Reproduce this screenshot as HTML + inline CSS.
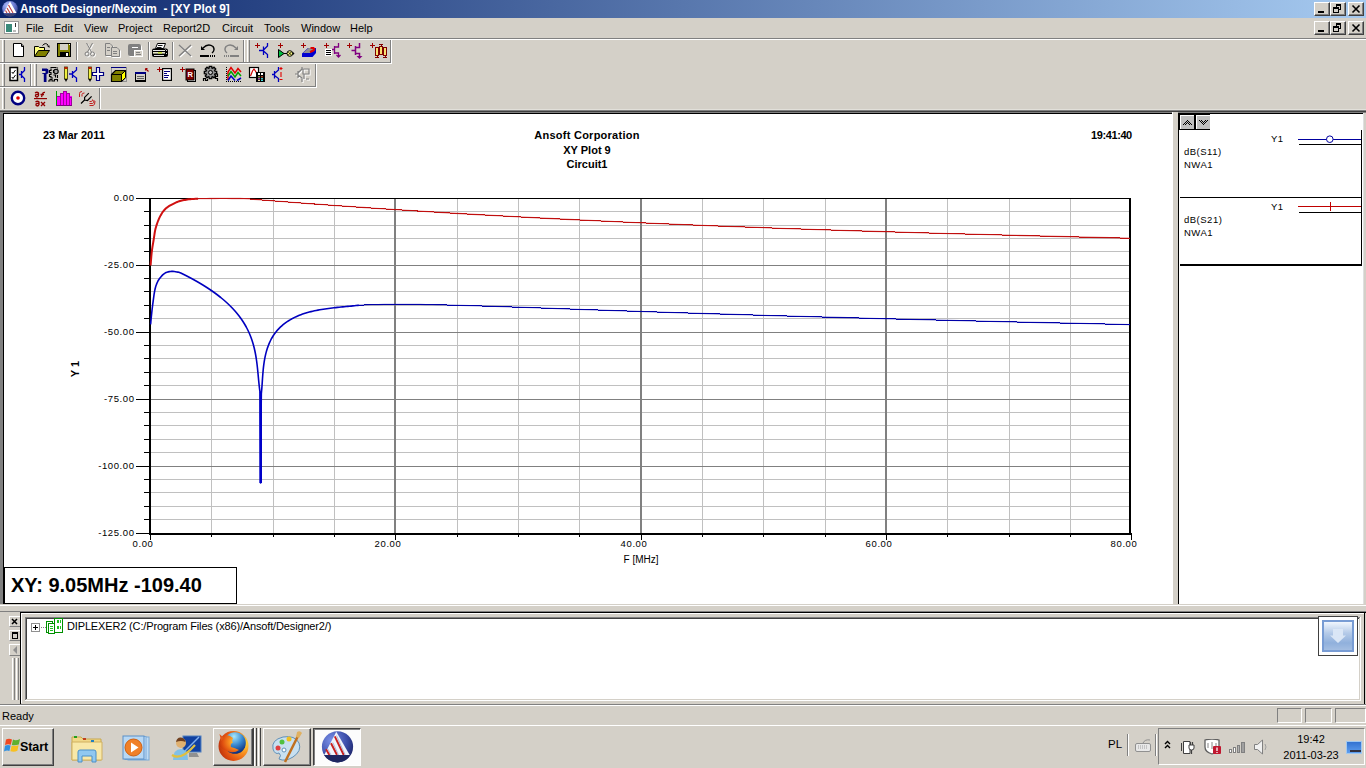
<!DOCTYPE html>
<html><head><meta charset="utf-8">
<style>
*{margin:0;padding:0;box-sizing:border-box}
html,body{width:1366px;height:768px;overflow:hidden;background:#d4d0c8;font-family:"Liberation Sans",sans-serif;position:relative}
.a{position:absolute}
#title{left:0;top:0;width:1366px;height:18px;background:linear-gradient(to right,#0a246a 0%,#a6caf0 100%)}
#title .t{left:20px;top:2px;color:#fff;font-weight:bold;font-size:11.85px;letter-spacing:0px;white-space:pre}
.cb{width:16px;height:14px;background:#d4d0c8;border-top:1px solid #fff;border-left:1px solid #fff;border-right:1px solid #404040;border-bottom:1px solid #404040;box-shadow:inset -1px -1px 0 #808080}
.cb svg{position:absolute;left:0;top:0}
#menu .m{top:22px;font-size:11px;color:#000}
.hl{height:1px}
.grip{width:3px;border-left:1px solid #fff;border-right:1px solid #808080;background:#d4d0c8}
.sep{width:2px;border-left:1px solid #808080;border-right:1px solid #fff}
.tb{border-top:1px solid #fff;border-left:1px solid #fff;border-right:1px solid #808080;border-bottom:1px solid #808080}
.yl{position:absolute;left:60px;width:74.6px;text-align:right;font-size:9.5px;letter-spacing:0.6px;line-height:12px;color:#000}
.xl{position:absolute;top:538px;width:80px;text-align:center;font-size:9.5px;letter-spacing:0.6px;line-height:12px;color:#000}
.ic{position:absolute}
.lg{font-size:9.5px;letter-spacing:0.5px;color:#000;position:absolute}
</style></head><body>
<!-- title bar -->
<div id="title" class="a">
  <svg class="a" style="left:1px;top:0px" width="18" height="18" viewBox="0 0 18 18"><defs><radialGradient id="tl" cx="0.35" cy="0.3" r="0.8"><stop offset="0" stop-color="#b0c0ff"/><stop offset="0.55" stop-color="#6a7ad0"/><stop offset="1" stop-color="#303a80"/></radialGradient></defs><circle cx="9" cy="8.7" r="7.8" fill="url(#tl)"/><path d="M9,1.5 L15.5,13 H2.5 Z" fill="#fff"/><path d="M7.5,5 L12,13 M6,8 L9,13 M4.5,10.5 L6,13" stroke="#c04040" stroke-width="1.1"/><path d="M3,13.5 H15 Q13,16.5 9,16.5 Q5,16.5 3,13.5 Z" fill="#3a4070"/></svg>
  <div class="a t">Ansoft Designer/Nexxim  - [XY Plot 9]</div>
</div>
<div class="a cb" style="left:1314px;top:2px"><svg width="14" height="12"><rect x="3" y="8" width="6" height="2" fill="#000"/></svg></div>
<div class="a cb" style="left:1330px;top:2px"><svg width="14" height="12" shape-rendering="crispEdges"><rect x="5" y="1" width="4" height="5" fill="none" stroke="#000" stroke-width="1" transform="translate(0.5,0.5)"/><rect x="5" y="1" width="5" height="2" fill="#000"/><rect x="2" y="4" width="6" height="6" fill="#d4d0c8"/><rect x="2.5" y="4.5" width="5" height="5" fill="none" stroke="#000"/><rect x="2" y="4" width="6" height="2" fill="#000"/></svg></div>
<div class="a cb" style="left:1348px;top:2px"><svg width="14" height="12"><path d="M3.5,2.5 L10.5,9.5 M10.5,2.5 L3.5,9.5" stroke="#000" stroke-width="1.6"/></svg></div>

<!-- menu bar -->
<div id="menu">
  <svg class="a" style="left:4px;top:21px" width="15" height="13"><rect x="0.5" y="0.5" width="14" height="12" fill="#fff" stroke="#9a9a9a"/><rect x="2" y="3" width="6" height="8" fill="#3a8a7a"/><rect x="11" y="2" width="1" height="4" fill="#333"/><rect x="9" y="9" width="3" height="2" fill="#bbb"/></svg>
  <div class="a m" style="left:26px">File</div>
  <div class="a m" style="left:54px">Edit</div>
  <div class="a m" style="left:84px">View</div>
  <div class="a m" style="left:118px">Project</div>
  <div class="a m" style="left:163px">Report2D</div>
  <div class="a m" style="left:222px">Circuit</div>
  <div class="a m" style="left:264px">Tools</div>
  <div class="a m" style="left:301px">Window</div>
  <div class="a m" style="left:350px">Help</div>
</div>
<div class="a cb" style="left:1314px;top:21px"><svg width="14" height="12"><rect x="3" y="8" width="6" height="2" fill="#000"/></svg></div>
<div class="a cb" style="left:1330px;top:21px"><svg width="14" height="12" shape-rendering="crispEdges"><rect x="5" y="1" width="4" height="5" fill="none" stroke="#000" stroke-width="1" transform="translate(0.5,0.5)"/><rect x="5" y="1" width="5" height="2" fill="#000"/><rect x="2" y="4" width="6" height="6" fill="#d4d0c8"/><rect x="2.5" y="4.5" width="5" height="5" fill="none" stroke="#000"/><rect x="2" y="4" width="6" height="2" fill="#000"/></svg></div>
<div class="a cb" style="left:1348px;top:21px"><svg width="14" height="12"><path d="M3.5,2.5 L10.5,9.5 M10.5,2.5 L3.5,9.5" stroke="#000" stroke-width="1.6"/></svg></div>
<div class="a hl" style="left:0;top:38px;width:1366px;background:#808080"></div>
<div class="a hl" style="left:0;top:39px;width:1366px;background:#fff"></div>

<!-- toolbar rows -->
<div class="a" style="left:0;top:62px;width:391px;height:1px;background:#808080"></div>
<div class="a" style="left:0;top:63px;width:392px;height:1px;background:#fff"></div>
<div class="a" style="left:390px;top:40px;width:1px;height:23px;background:#808080"></div>
<div class="a" style="left:391px;top:39px;width:1px;height:25px;background:#fff"></div>
<div class="a grip" style="left:2px;top:40px;height:22px"></div>
<div class="a" style="left:243px;top:40px;width:1px;height:22px;background:#808080"></div>
<div class="a" style="left:244px;top:40px;width:1px;height:22px;background:#fff"></div>
<div class="a grip" style="left:247px;top:40px;height:22px"></div>
<div class="a" style="left:0;top:86px;width:316px;height:1px;background:#808080"></div>
<div class="a" style="left:0;top:87px;width:317px;height:1px;background:#fff"></div>
<div class="a" style="left:315px;top:64px;width:1px;height:23px;background:#808080"></div>
<div class="a" style="left:316px;top:63px;width:1px;height:25px;background:#fff"></div>
<div class="a grip" style="left:2px;top:64px;height:22px"></div>
<div class="a" style="left:30px;top:64px;width:1px;height:22px;background:#808080"></div>
<div class="a" style="left:31px;top:64px;width:1px;height:22px;background:#fff"></div>
<div class="a grip" style="left:34px;top:64px;height:22px"></div>
<div class="a" style="left:99px;top:88px;width:1px;height:22px;background:#808080"></div>
<div class="a" style="left:100px;top:87px;width:1px;height:23px;background:#fff"></div>
<div class="a grip" style="left:2px;top:88px;height:21px"></div>
<svg class="a" style="left:0;top:0" width="400" height="112">
<g shape-rendering="crispEdges">
<!-- separators toolbar1 -->
<rect x="76" y="42" width="1" height="18" fill="#808080"/><rect x="77" y="42" width="1" height="18" fill="#fff"/>
<rect x="148" y="42" width="1" height="18" fill="#808080"/><rect x="149" y="42" width="1" height="18" fill="#fff"/>
<rect x="172" y="42" width="1" height="18" fill="#808080"/><rect x="173" y="42" width="1" height="18" fill="#fff"/>
</g>
<!-- New -->
<path d="M13.5,43.5 H21 L23.5,46 V56.5 H13.5 Z" fill="#fff" stroke="#000"/>
<path d="M21.5,43.5 V46.5 H23.5" fill="none" stroke="#000"/>
<!-- Open -->
<path d="M34.5,56.5 V46.5 H38.5 L39.5,47.5 H44.5 V50" fill="#ffff80" stroke="#000"/>
<path d="M34.5,56.5 L38.5,50.5 H49.5 L45.5,56.5 Z" fill="#808000" stroke="#000"/>
<path d="M42.5,45.5 Q45.5,42 48,45" fill="none" stroke="#000" stroke-width="1"/>
<path d="M46.5,45.5 H49.5 V48 Z" fill="#000"/>
<!-- Save -->
<rect x="57.5" y="43.5" width="13" height="13" fill="#808000" stroke="#000"/>
<rect x="60" y="44" width="8" height="6" fill="#d4d0c8"/>
<rect x="60" y="52" width="9" height="4" fill="#000"/>
<rect x="66" y="53" width="2" height="3" fill="#fff"/>
<rect x="69" y="44" width="1" height="1" fill="#fff"/>
<!-- Cut disabled -->
<g fill="none" stroke="#fff" transform="translate(1,1)"><path d="M86.5,43 L91.5,52 M92.5,43 L87.5,52"/><circle cx="87" cy="54" r="2"/><circle cx="92.5" cy="54" r="2"/></g>
<g fill="none" stroke="#808080"><path d="M86.5,43 L91.5,52 M92.5,43 L87.5,52"/><circle cx="87" cy="54" r="2"/><circle cx="92.5" cy="54" r="2"/></g>
<!-- Copy disabled -->
<g fill="#d4d0c8" stroke="#fff" transform="translate(1,1)"><path d="M105.5,43.5 H110 L112.5,46 V55.5 H105.5 Z"/><path d="M111.5,47.5 H117 L119.5,50 V56.5 H111.5 Z"/></g>
<g fill="#d4d0c8" stroke="#808080"><path d="M105.5,43.5 H110 L112.5,46 V55.5 H105.5 Z"/><path d="M111.5,47.5 H117 L119.5,50 V56.5 H111.5 Z"/><path d="M107,47.5 H110 M107,50.5 H110 M113,51.5 H117 M113,53.5 H117" /></g>
<!-- Paste disabled -->
<rect x="129" y="45" width="13" height="12" rx="2" fill="#fff"/>
<rect x="128" y="44" width="13" height="12" rx="2" fill="#808080"/>
<rect x="132" y="47" width="6" height="1" fill="#fff"/>
<rect x="134.5" y="50.5" width="8" height="6" fill="#d4d0c8" stroke="#fff"/>
<path d="M136,52.5 H140 M136,54.5 H141" stroke="#808080"/>
<!-- Print -->
<path d="M157.5,43.5 H165.5 L163.5,48.5 H155.5 Z" fill="#fff" stroke="#000"/>
<path d="M158,45.5 H162.5 M157,47.5 H161.5" stroke="#000" stroke-width="0.9"/>
<rect x="152" y="48.5" width="16" height="8.5" rx="2" fill="#000"/>
<rect x="153" y="50" width="12" height="1" fill="#e8e8e8"/>
<rect x="153" y="52" width="12" height="1.6" fill="#e8e8c8"/><rect x="158" y="52" width="4" height="1.6" fill="#c8e040"/>
<rect x="154" y="55" width="10" height="1" fill="#e0e0e0"/>
<path d="M165.5,49.5 L167,51 M166,53 L167,54" stroke="#fff" stroke-width="0.8"/>
<!-- Delete X disabled -->
<path d="M179,45 L191,56 M191,45 L179,56" stroke="#fff" stroke-width="1.5" transform="translate(1,1)"/>
<path d="M179,45 L191,56 M191,45 L179,56" stroke="#808080" stroke-width="1.5"/>
<!-- Undo -->
<path d="M203,48 Q208,43 213,46.5 Q215.5,50 212,53" fill="none" stroke="#000" stroke-width="1.4"/>
<path d="M201,46 L201,50 L205,50 Z" fill="#000"/>
<rect x="200" y="55" width="9" height="2" fill="#000"/>
<rect x="210" y="55" width="1" height="2" fill="#000"/><rect x="212" y="55" width="1" height="2" fill="#000"/><rect x="214" y="55" width="1" height="2" fill="#000"/>
<!-- Redo disabled -->
<path d="M236,48 Q231,43 226,46.5 Q223.5,50 227,53" fill="none" stroke="#808080" stroke-width="1.4"/>
<path d="M238,46 L238,50 L234,50 Z" fill="#808080"/>
<rect x="230" y="55" width="9" height="2" fill="#808080"/>
<rect x="224" y="55" width="1" height="2" fill="#808080"/><rect x="226" y="55" width="1" height="2" fill="#808080"/><rect x="228" y="55" width="1" height="2" fill="#808080"/>

<!-- toolbar1b -->
<g stroke="#a00000" stroke-width="1.2" shape-rendering="crispEdges"><path d="M255,45.5 H260 M257.5,43 V48"/><path d="M278,45.5 H283 M280.5,43 V48"/><path d="M301,45.5 H306 M303.5,43 V48"/><path d="M324,45.5 H329 M326.5,43 V48"/><path d="M347,45.5 H352 M349.5,43 V48"/><path d="M370,45.5 H375 M372.5,43 V48"/></g>
<!-- transistor blue -->
<g stroke="#0000c0" stroke-width="1.3" fill="none"><path d="M259,50.5 H263.5 M263.5,46.5 V55 M263.5,50 L267.5,46 V43 M263.5,51 L267.5,54.5 V58"/></g>
<!-- amp + mixer -->
<path d="M278.5,49.5 L284,53.5 L278.5,57.5 Z" fill="#00c040" stroke="#000"/>
<path d="M284,53.5 H287" stroke="#000"/>
<circle cx="289.8" cy="53.5" r="2.8" fill="#ffff80" stroke="#000"/>
<path d="M288.3,52 L291.3,55 M291.3,52 L288.3,55" stroke="#000" stroke-width="0.8"/>
<path d="M292.5,51.5 L294.5,53.5 L292.5,55.5 Z" fill="#000"/>
<!-- magnet -->
<path d="M302,53.5 L308,48 H316 V53 L312.5,57 H302 Z" fill="#0000d0"/>
<path d="M303,53 L308.5,48 H315.5 L310,53 Z" fill="#909090"/>
<path d="M310,52 Q316,50 313.5,48 L310.5,48" fill="none" stroke="#e00000" stroke-width="2"/>
<!-- mosfet + list -->
<rect x="325" y="49" width="7" height="7" fill="#fff"/>
<g shape-rendering="crispEdges" fill="#000"><rect x="326" y="50" width="5" height="1"/><rect x="326" y="52" width="5" height="1"/><rect x="326" y="54" width="5" height="1"/></g>
<g stroke="#800080" stroke-width="1.3" fill="none"><path d="M332,49.5 H334.5 M334.5,46 V54 M334.5,47 H338.5 V43 M334.5,53 H338.5 V58 M336.5,55 L338.5,57 L340.5,55"/></g>
<g stroke="#800080" stroke-width="1.5" fill="none"><path d="M351.5,50.5 H355.5 M355.5,46 V55 M355.5,47.5 H359.5 V43 M355.5,53.5 H359.5 V57"/></g>
<path d="M356.5,56 H362.5 L359.5,59 Z" fill="#800080"/>
<!-- resistors -->
<g shape-rendering="crispEdges">
<rect x="375" y="47" width="4" height="9" fill="#800000"/><rect x="376" y="48" width="2" height="7" fill="#f8e070"/>
<rect x="379" y="46" width="4" height="9" fill="#800000"/><rect x="380" y="47" width="2" height="7" fill="#f8e070"/>
<rect x="383" y="47" width="4" height="9" fill="#800000"/><rect x="384" y="48" width="2" height="7" fill="#f8e070"/>
<rect x="376.5" y="56" width="1" height="2" fill="#800000"/><rect x="375" y="57" width="4" height="1" fill="#800000"/>
<rect x="384.5" y="56" width="1" height="2" fill="#800000"/><rect x="383" y="57" width="4" height="1" fill="#800000"/>
<rect x="380.5" y="44" width="1" height="2" fill="#800000"/><rect x="379" y="44" width="4" height="1" fill="#800000"/>
</g>
<!-- toolbar 2 -->
<rect x="10" y="67.5" width="7.5" height="13" fill="#fff" stroke="#000" stroke-width="1.5"/>
<path d="M11.8,72 L13,73.5 L15.5,70 M11.8,77 L13,78.5 L15.5,75" stroke="#000" stroke-width="1" fill="none"/>
<g stroke="#0000c0" stroke-width="1.3" fill="none"><path d="M19,74.5 H21.5 M21.5,71 V78 M21.5,73.5 L24.5,70.5 V67 M21.5,75.5 L24.5,78.5 V82"/></g>
<!-- wrench + gear -->
<path d="M42,68.5 H46.8 Q48.6,68.8 48.6,71 V72.2 Q48.4,74 46.5,74 V82 H43.8 V74 Q42,74 42,73 H45.5 V71 H42 Z" fill="#000080"/>
<rect x="48.5" y="67.5" width="9" height="14" fill="#b0b0b0" opacity="0.35"/>
<g fill="none" stroke="#000" stroke-width="1.1">
<path d="M50.5,67.5 H56.5 M57.5,67.5 V68.5"/>
<circle cx="56" cy="71.5" r="2.2" fill="#a0a0a0"/>
<path d="M51,68.5 V70.5 H49.5 V72.5 H51 V74.5 H49.5 V76.5 H51 V78 H53"/>
<path d="M53.5,70 V73 M53.5,75 H55.5 V77.5 M57.5,75 V78"/>
<path d="M48,81 H50 V79.5 H52 V81 H54.5 V79.5 H57.5 V81.5"/>
</g>
<!-- pencil transistor -->
<rect x="64.5" y="67" width="3" height="12" fill="#f0f040" stroke="#303000" stroke-width="0.8"/>
<rect x="64.5" y="67" width="3" height="2" fill="#c02000"/>
<path d="M64.5,79 L66,82 L67.5,79 Z" fill="#000"/>
<g stroke="#0000c0" stroke-width="1.3" fill="none"><path d="M69,74 H72.5 M72.5,71 V78 M72.5,73.5 L76.5,70 V67 M72.5,75 L76.5,78 V82"/></g>
<!-- pencil cross -->
<rect x="88.5" y="67" width="3" height="12" fill="#f0f040" stroke="#303000" stroke-width="0.8"/>
<rect x="88.5" y="67" width="3" height="2" fill="#c02000"/>
<path d="M88.5,79 L90,82 L91.5,79 Z" fill="#000"/>
<path d="M96.5,67.5 H99.5 V72.5 H103.5 V75.5 H99.5 V80.5 H96.5 V75.5 H92.5 V72.5 H96.5 Z" fill="#fff" stroke="#000080" stroke-width="1.2"/>
<!-- box -->
<rect x="111.5" y="67.5" width="15" height="14" fill="none" stroke="#909090"/>
<rect x="111" y="67" width="15" height="1" fill="#000080"/>
<path d="M111.5,74.5 L115.5,70.5 H125.5 V77.5 L121.5,81.5 H111.5 Z" fill="#808000" stroke="#000" stroke-width="1.2"/>
<path d="M121.5,74.5 L125.5,70.5 V77.5 L121.5,81.5 Z" fill="#ffff00" stroke="#000" stroke-width="1"/>
<path d="M111.5,74.5 H121.5 V81.5" fill="none" stroke="#000"/>
<!-- window arrow -->
<rect x="135.5" y="72.5" width="10" height="9" fill="#d4d0c8" stroke="#000"/>
<rect x="135" y="72" width="11" height="2" fill="#000080"/>
<rect x="135" y="80" width="11" height="2" fill="#000"/>
<path d="M137,76.5 H144 M137,78.5 H144" stroke="#606060"/>
<path d="M145.5,68.5 L148.5,71.5 M145.5,68.5 V70.5 M145.5,68.5 H147.5" stroke="#a00000" stroke-width="1.1"/>
<!-- + doc -->
<g shape-rendering="crispEdges" fill="#a00000"><rect x="157" y="69" width="5" height="1.4"/><rect x="158.8" y="67" width="1.4" height="5"/><rect x="180" y="69" width="5" height="1.4"/><rect x="181.8" y="67" width="1.4" height="5"/></g>
<rect x="162.6" y="68.6" width="8.8" height="11.8" fill="#fff" stroke="#000" stroke-width="1.2"/>
<g shape-rendering="crispEdges" fill="#000080"><rect x="164" y="71" width="6" height="1"/><rect x="164" y="73" width="3" height="1"/><rect x="164" y="75" width="5" height="1"/><rect x="164" y="77" width="4" height="1"/></g>
<!-- + R -->
<rect x="187.5" y="70.5" width="8" height="11" fill="#fff" stroke="#000"/>
<rect x="186" y="69" width="8" height="11" fill="#800000" stroke="#000" stroke-width="1"/>
<text x="187.6" y="77.3" font-size="7.5" font-weight="bold" fill="#fff" font-family="Liberation Sans">R</text>
<!-- gear -->
<path d="M216.67,71.25 L216.67,73.75 L214.99,73.89 L214.66,74.69 L215.75,75.98 L213.98,77.75 L212.69,76.66 L211.89,76.99 L211.75,78.67 L209.25,78.67 L209.11,76.99 L208.31,76.66 L207.02,77.75 L205.25,75.98 L206.34,74.69 L206.01,73.89 L204.33,73.75 L204.33,71.25 L206.01,71.11 L206.34,70.31 L205.25,69.02 L207.02,67.25 L208.31,68.34 L209.11,68.01 L209.25,66.33 L211.75,66.33 L211.89,68.01 L212.69,68.34 L213.98,67.25 L215.75,69.02 L214.66,70.31 L214.99,71.11 Z" fill="#909090" stroke="#000" stroke-width="1.3"/>
<circle cx="210.5" cy="72.5" r="2" fill="#c0c0c0" stroke="#000" stroke-width="1"/>
<path d="M203.5,81 V78.5 H205.5 V80.5 H207.5 V79" fill="none" stroke="#000" stroke-width="1.2"/>
<path d="M215,74 H217.5 V76.5 H215.5 V78.5 H217.5 V81" fill="none" stroke="#000" stroke-width="1.2"/>
<!-- chart -->
<path d="M226.5,67 V82 M226,81.5 H242" stroke="#000" stroke-dasharray="1,1"/>
<path d="M228,80 V72 L231,67.5 L235,73 L238,68.5 L241,72" fill="none" stroke="#e00000" stroke-width="1.5"/>
<path d="M228,76 L231,71.5 L235,77 L238,72.5 L241,76" fill="none" stroke="#00a000" stroke-width="1.5"/>
<path d="M228,80.5 L231,76 L235,80.5 M237,80.5 L241,78" fill="none" stroke="#0000c0" stroke-width="1.5"/>
<!-- plot palette -->
<rect x="249.5" y="67.5" width="9" height="10" fill="#fff" stroke="#000" stroke-width="1.2"/>
<path d="M250.5,76 L252.5,71 L254,69 L256,72 L257.5,76" fill="none" stroke="#d00000" stroke-width="1.2"/>
<rect x="256" y="72" width="9" height="10" fill="#000"/>
<rect x="258" y="73" width="2" height="2" fill="#fff"/><rect x="261" y="73" width="2" height="2" fill="#fff"/>
<rect x="258" y="76" width="2" height="1.5" fill="#808040"/><rect x="261" y="76" width="2" height="1.5" fill="#a04020"/>
<rect x="258" y="78" width="2" height="1.5" fill="#a040a0"/><rect x="261" y="78" width="2" height="1.5" fill="#40c0c0"/>
<rect x="258" y="80" width="2" height="1" fill="#f0e0a0"/><rect x="261" y="80" width="2" height="1" fill="#40e0e0"/>
<!-- transistor +1- -->
<g stroke="#0000c0" stroke-width="1.3" fill="none"><path d="M272,74.5 H274.5 M274.5,71 V78.5 M274.5,73.5 L278.5,70 V67 M274.5,75.5 L278.5,78.5 V82"/></g>
<path d="M279.5,68.5 H282.5 M281,67 V70 M281,72 V77 M279.5,79.5 H282.5" stroke="#e00000" stroke-width="1.1"/>
<!-- gray disabled -->
<g stroke="#fff" stroke-width="1.2" fill="none" transform="translate(1,1)"><path d="M295,74 H298 M298,71 V78 M298,73 L302,69 V67 M298,75 L302,78 V82 M303,69 H309 V74 H303 Z M304,74 V79 M306,79 H309"/></g>
<g stroke="#808080" stroke-width="1.2" fill="none"><path d="M295,74 H298 M298,71 V78 M298,73 L302,69 V67 M298,75 L302,78 V82 M303,69 H309 V74 H303 Z M304,74 V79 M306,79 H309"/></g>

<!-- toolbar 3 -->
<circle cx="18" cy="98" r="6.2" fill="#fff" stroke="#000080" stroke-width="2.4"/>
<circle cx="18" cy="98" r="1.8" fill="#e00000"/>
<g fill="none" stroke="#900000" stroke-width="1.3">
<path d="M35,93 Q37,91.5 38.5,93 V95.5 Q38,97 36.5,97 Q35,96.5 35.5,95 Q36.5,94 38.5,94.5"/>
<path d="M45,92.5 Q43,92 42.5,94 L41.5,97 M40.5,94.5 H44"/>
<path d="M35.5,102 Q37.5,100.5 39,102 V104.5 Q38.5,106 37,106 Q35.5,105.5 36,104 Q37,103 39,103.5"/>
<path d="M41,102 L45,106 M45,102 L41,106"/>
</g>
<rect x="34" y="98" width="13" height="1.2" fill="#900000"/>
<rect x="56" y="91" width="1" height="15" fill="#00a000"/>
<g shape-rendering="crispEdges">
<rect x="57" y="96" width="15" height="10" fill="#ff00ff"/>
<rect x="60" y="93" width="3" height="3" fill="#ff00ff"/><rect x="63" y="91.5" width="3" height="5" fill="#ff00ff"/><rect x="66" y="93" width="3" height="3" fill="#ff00ff"/>
<rect x="57" y="96" width="3" height="1" fill="#a000a0"/><rect x="60" y="93" width="3" height="1" fill="#a000a0"/><rect x="63" y="91" width="3" height="1" fill="#a000a0"/><rect x="66" y="93" width="3" height="1" fill="#a000a0"/><rect x="69" y="97" width="3" height="1" fill="#a000a0"/>
<rect x="60" y="93" width="1" height="13" fill="#a000a0"/><rect x="63" y="91" width="1" height="15" fill="#a000a0"/><rect x="66" y="91" width="1" height="15" fill="#a000a0"/><rect x="69" y="93" width="1" height="13" fill="#a000a0"/><rect x="71" y="97" width="1" height="9" fill="#a000a0"/>
<rect x="69" y="97" width="2" height="0" fill="#ff00ff"/>
<rect x="56" y="105" width="16" height="1" fill="#800080"/>
</g>
<path d="M81,103.5 L84.6,100 V97.4 L88.8,93.2 M84.6,100 L87.5,100.5 L91.6,96.3" stroke="#000" stroke-width="1.2" fill="none"/>
<g fill="none" stroke="#c02020" stroke-width="1">
<path d="M79.5,97 V93.5 Q79.5,91.5 82,91.5"/><path d="M82,96.5 V94.5 Q82,93 84.5,93"/>
<path d="M89.5,101.5 H91.5 Q92.5,101.5 92.5,99.5"/><path d="M89.5,103.5 H92.5 Q94,103.5 94,100"/><path d="M89.5,105.5 H93 Q95,105.5 95,101"/>
</g>
</svg>


<!-- MDI area -->
<div class="a" style="left:0;top:109px;width:1366px;height:1px;background:#e2e0da"></div>
<div class="a" style="left:0;top:110px;width:1366px;height:1px;background:#808080"></div>
<div class="a" style="left:0;top:111px;width:1366px;height:1px;background:#404040"></div>
<div class="a" style="left:0;top:112px;width:1366px;height:1px;background:#808080"></div>
<!-- plot window -->
<div class="a" style="left:0;top:113px;width:1173px;height:492px;background:#808080"></div>
<div class="a" style="left:3px;top:113px;width:1170px;height:491px;background:#000"></div>
<div class="a" style="left:4px;top:114px;width:1168px;height:490px;background:#fff"></div>
<div class="a" style="left:1172px;top:112px;width:6px;height:494px;background:#d4d0c8;border-left:1px solid #fff"></div>
<svg class="a" style="left:0;top:0" width="1366" height="768"><rect x="151" y="211" width="978" height="1" fill="#c0c0c0"/>
<rect x="151" y="225" width="978" height="1" fill="#c0c0c0"/>
<rect x="151" y="238" width="978" height="1" fill="#c0c0c0"/>
<rect x="151" y="251" width="978" height="1" fill="#c0c0c0"/>
<rect x="151" y="278" width="978" height="1" fill="#c0c0c0"/>
<rect x="151" y="291" width="978" height="1" fill="#c0c0c0"/>
<rect x="151" y="305" width="978" height="1" fill="#c0c0c0"/>
<rect x="151" y="318" width="978" height="1" fill="#c0c0c0"/>
<rect x="151" y="345" width="978" height="1" fill="#c0c0c0"/>
<rect x="151" y="358" width="978" height="1" fill="#c0c0c0"/>
<rect x="151" y="372" width="978" height="1" fill="#c0c0c0"/>
<rect x="151" y="385" width="978" height="1" fill="#c0c0c0"/>
<rect x="151" y="412" width="978" height="1" fill="#c0c0c0"/>
<rect x="151" y="425" width="978" height="1" fill="#c0c0c0"/>
<rect x="151" y="439" width="978" height="1" fill="#c0c0c0"/>
<rect x="151" y="452" width="978" height="1" fill="#c0c0c0"/>
<rect x="151" y="479" width="978" height="1" fill="#c0c0c0"/>
<rect x="151" y="492" width="978" height="1" fill="#c0c0c0"/>
<rect x="151" y="506" width="978" height="1" fill="#c0c0c0"/>
<rect x="151" y="519" width="978" height="1" fill="#c0c0c0"/>
<rect x="211" y="199" width="1" height="334" fill="#c0c0c0"/>
<rect x="273" y="199" width="1" height="334" fill="#c0c0c0"/>
<rect x="334" y="199" width="1" height="334" fill="#c0c0c0"/>
<rect x="457" y="199" width="1" height="334" fill="#c0c0c0"/>
<rect x="518" y="199" width="1" height="334" fill="#c0c0c0"/>
<rect x="579" y="199" width="1" height="334" fill="#c0c0c0"/>
<rect x="702" y="199" width="1" height="334" fill="#c0c0c0"/>
<rect x="763" y="199" width="1" height="334" fill="#c0c0c0"/>
<rect x="825" y="199" width="1" height="334" fill="#c0c0c0"/>
<rect x="947" y="199" width="1" height="334" fill="#c0c0c0"/>
<rect x="1009" y="199" width="1" height="334" fill="#c0c0c0"/>
<rect x="1070" y="199" width="1" height="334" fill="#c0c0c0"/>
<rect x="151" y="265" width="978" height="1" fill="#808080"/>
<rect x="151" y="332" width="978" height="1" fill="#808080"/>
<rect x="151" y="399" width="978" height="1" fill="#808080"/>
<rect x="151" y="466" width="978" height="1" fill="#808080"/>
<rect x="394" y="199" width="2" height="334" fill="#808080"/>
<rect x="640" y="199" width="2" height="334" fill="#808080"/>
<rect x="885" y="199" width="2" height="334" fill="#808080"/>
<rect x="136" y="198" width="995" height="1" fill="#000"/>
<rect x="149" y="198" width="2" height="337" fill="#000"/>
<rect x="1129" y="198" width="2" height="337" fill="#000"/>
<rect x="149" y="533" width="983" height="2" fill="#000"/>
<rect x="136" y="198" width="13" height="1" fill="#000"/>
<rect x="136" y="265" width="13" height="1" fill="#000"/>
<rect x="136" y="332" width="13" height="1" fill="#000"/>
<rect x="136" y="399" width="13" height="1" fill="#000"/>
<rect x="136" y="466" width="13" height="1" fill="#000"/>
<rect x="136" y="533" width="13" height="1" fill="#000"/>
<rect x="144" y="211" width="5" height="1" fill="#000"/>
<rect x="144" y="225" width="5" height="1" fill="#000"/>
<rect x="144" y="238" width="5" height="1" fill="#000"/>
<rect x="144" y="251" width="5" height="1" fill="#000"/>
<rect x="144" y="278" width="5" height="1" fill="#000"/>
<rect x="144" y="291" width="5" height="1" fill="#000"/>
<rect x="144" y="305" width="5" height="1" fill="#000"/>
<rect x="144" y="318" width="5" height="1" fill="#000"/>
<rect x="144" y="345" width="5" height="1" fill="#000"/>
<rect x="144" y="358" width="5" height="1" fill="#000"/>
<rect x="144" y="372" width="5" height="1" fill="#000"/>
<rect x="144" y="385" width="5" height="1" fill="#000"/>
<rect x="144" y="412" width="5" height="1" fill="#000"/>
<rect x="144" y="425" width="5" height="1" fill="#000"/>
<rect x="144" y="439" width="5" height="1" fill="#000"/>
<rect x="144" y="452" width="5" height="1" fill="#000"/>
<rect x="144" y="479" width="5" height="1" fill="#000"/>
<rect x="144" y="492" width="5" height="1" fill="#000"/>
<rect x="144" y="506" width="5" height="1" fill="#000"/>
<rect x="144" y="519" width="5" height="1" fill="#000"/>
<rect x="211" y="535" width="1" height="2" fill="#000"/>
<rect x="273" y="535" width="1" height="2" fill="#000"/>
<rect x="334" y="535" width="1" height="2" fill="#000"/>
<rect x="457" y="535" width="1" height="2" fill="#000"/>
<rect x="518" y="535" width="1" height="2" fill="#000"/>
<rect x="579" y="535" width="1" height="2" fill="#000"/>
<rect x="702" y="535" width="1" height="2" fill="#000"/>
<rect x="763" y="535" width="1" height="2" fill="#000"/>
<rect x="825" y="535" width="1" height="2" fill="#000"/>
<rect x="947" y="535" width="1" height="2" fill="#000"/>
<rect x="1009" y="535" width="1" height="2" fill="#000"/>
<rect x="1070" y="535" width="1" height="2" fill="#000"/>
<rect x="150" y="535" width="1" height="5" fill="#000"/>
<rect x="395" y="535" width="1" height="5" fill="#000"/>
<rect x="641" y="535" width="1" height="5" fill="#000"/>
<rect x="886" y="535" width="1" height="5" fill="#000"/>
<rect x="1131" y="535" width="1" height="5" fill="#000"/>
<path d="M150.60,265.50 L150.72,263.97 L150.88,261.85 L151.08,259.34 L151.30,256.66 L151.54,254.01 L151.80,251.60 L152.09,249.37 L152.43,247.13 L152.79,244.93 L153.15,242.80 L153.49,240.78 L153.80,238.90 L154.06,237.18 L154.29,235.60 L154.50,234.13 L154.71,232.74 L154.94,231.41 L155.20,230.10 L155.49,228.84 L155.81,227.65 L156.14,226.52 L156.48,225.43 L156.84,224.36 L157.20,223.30 L157.57,222.26 L157.93,221.26 L158.31,220.29 L158.71,219.33 L159.14,218.37 L159.60,217.40 L160.10,216.41 L160.62,215.41 L161.18,214.41 L161.76,213.43 L162.36,212.48 L163.00,211.60 L163.66,210.77 L164.34,209.99 L165.04,209.25 L165.79,208.54 L166.57,207.86 L167.40,207.20 L168.30,206.57 L169.26,205.96 L170.26,205.38 L171.29,204.83 L172.31,204.30 L173.30,203.80 L174.27,203.32 L175.24,202.86 L176.20,202.43 L177.16,202.02 L178.13,201.64 L179.10,201.30 L180.04,201.00 L180.95,200.74 L181.87,200.51 L182.82,200.30 L183.85,200.10 L185.00,199.90 L186.21,199.70 L187.43,199.51 L188.73,199.34 L190.17,199.17 L191.82,199.03 L193.75,198.90 L195.87,198.79 L198.10,198.71" fill="none" stroke="#d01010" stroke-width="2"/>
<path d="M195.87,198.79 L198.10,198.71 L200.55,198.64 L203.29,198.58 L206.41,198.54 L210.00,198.50 L214.55,198.48 L220.09,198.47 L226.02,198.47 L231.71,198.49 L236.58,198.50 L240.00,198.50 L244.00,198.54 L252.00,199.19 L260.00,199.83 L268.00,200.47 L276.00,201.09 L284.00,201.71 L292.00,202.33 L300.00,202.93 L308.00,203.53 L316.00,204.12 L324.00,204.70 L332.00,205.28 L340.00,205.85 L348.00,206.41 L356.00,206.97 L364.00,207.52 L372.00,208.06 L380.00,208.59 L388.00,209.12 L396.00,209.64 L404.00,210.16 L412.00,210.67 L420.00,211.17 L450.00,213.00 L480.00,214.75 L510.00,216.42 L540.00,218.00 L570.00,219.52 L600.00,220.96 L630.00,222.33 L660.00,223.64 L690.00,224.88 L720.00,226.07 L750.00,227.20 L780.00,228.29 L810.00,229.32 L840.00,230.31 L870.00,231.26 L900.00,232.17 L930.00,233.04 L960.00,233.89 L990.00,234.70 L1020.00,235.49 L1050.00,236.26 L1080.00,237.02 L1110.00,237.76 L1130.00,238.24" fill="none" stroke="#c01010" stroke-width="1" shape-rendering="crispEdges"/>
<path d="M195.87,198.79 L198.10,198.71 L200.55,198.64 L203.29,198.58 L206.41,198.54 L210.00,198.50 L214.55,198.48 L220.09,198.47 L226.02,198.47 L231.71,198.49 L236.58,198.50 L240.00,198.50 L244.00,198.54 L252.00,199.19 L260.00,199.83 L268.00,200.47 L276.00,201.09 L284.00,201.71 L292.00,202.33 L300.00,202.93 L308.00,203.53 L316.00,204.12 L324.00,204.70 L332.00,205.28 L340.00,205.85 L348.00,206.41 L356.00,206.97 L364.00,207.52 L372.00,208.06 L380.00,208.59 L388.00,209.12 L396.00,209.64 L404.00,210.16 L412.00,210.67 L420.00,211.17 L450.00,213.00 L480.00,214.75 L510.00,216.42 L540.00,218.00 L570.00,219.52 L600.00,220.96 L630.00,222.33 L660.00,223.64 L690.00,224.88 L720.00,226.07 L750.00,227.20 L780.00,228.29 L810.00,229.32 L840.00,230.31 L870.00,231.26 L900.00,232.17 L930.00,233.04 L960.00,233.89 L990.00,234.70 L1020.00,235.49 L1050.00,236.26 L1080.00,237.02 L1110.00,237.76 L1130.00,238.24" fill="none" stroke="#c01010" stroke-width="1.3" opacity="0.45"/>
<path d="M150.60,324.40 L150.70,323.37 L150.83,321.94 L150.99,320.25 L151.16,318.43 L151.33,316.64 L151.50,315.00 L151.65,313.56 L151.79,312.22 L151.94,310.90 L152.10,309.51 L152.28,307.99 L152.50,306.25 L152.77,304.18 L153.07,301.81 L153.40,299.30 L153.74,296.81 L154.08,294.49 L154.40,292.50 L154.70,290.87 L154.97,289.49 L155.25,288.28 L155.54,287.18 L155.87,286.11 L156.25,285.00 L156.67,283.88 L157.11,282.80 L157.59,281.76 L158.12,280.74 L158.72,279.74 L159.40,278.75 L160.18,277.73 L161.05,276.68 L161.98,275.64 L162.97,274.67 L163.98,273.81 L165.00,273.10 L166.04,272.56 L167.11,272.15 L168.20,271.84 L169.32,271.63 L170.46,271.49 L171.60,271.40 L172.84,271.40 L174.21,271.53 L175.59,271.72 L176.88,271.94 L177.97,272.13 L178.75,272.25 L180.78,273.00 L182.82,274.00 L184.82,275.00 L186.79,276.00 L188.72,277.00 L190.61,278.00 L192.46,279.00 L194.28,280.00 L196.07,281.00 L197.82,282.00 L199.53,283.00 L201.21,284.00 L202.86,285.00 L204.47,286.00 L206.05,287.00 L207.60,288.00 L209.12,289.00 L210.60,290.00 L212.05,291.00 L213.47,292.00 L214.86,293.00 L216.21,294.00 L217.54,295.00 L218.84,296.00 L220.11,297.00 L221.35,298.00 L222.56,299.00 L223.74,300.00 L224.89,301.00 L226.02,302.00 L227.12,303.00 L228.19,304.00 L229.23,305.00 L230.25,306.00 L231.25,307.00 L232.21,308.00 L233.15,309.00 L234.07,310.00 L234.97,311.00 L235.83,312.00 L236.68,313.00 L237.50,314.00 L238.30,315.00 L239.08,316.00 L239.83,317.00 L240.56,318.00 L241.28,319.00 L241.97,320.00 L242.63,321.00 L243.28,322.00 L243.91,323.00 L244.52,324.00 L245.11,325.00 L245.68,326.00 L246.24,327.00 L246.77,328.00 L247.29,329.00 L247.79,330.00 L248.27,331.00 L248.73,332.00 L249.18,333.00 L249.61,334.00 L250.03,335.00 L250.43,336.00 L250.82,337.00 L251.19,338.00 L251.55,339.00 L251.90,340.00 L252.23,341.00 L252.55,342.00 L252.85,343.00 L253.15,344.00 L253.43,345.00 L253.70,346.00 L253.96,347.00 L254.21,348.00 L254.44,349.00 L254.67,350.00 L254.89,351.00 L255.10,352.00 L255.30,353.00 L255.49,354.00 L255.67,355.00 L255.84,356.00 L256.01,357.00 L256.17,358.00 L256.32,359.00 L256.47,360.00 L256.61,361.00 L256.75,362.00 L256.87,363.00 L257.00,364.00 L257.12,365.00 L257.23,366.00 L257.35,367.00 L257.45,368.00 L257.56,369.00 L257.66,370.00 L257.76,371.00 L257.86,372.00 L257.96,373.00 L258.05,374.00 L258.15,375.00 L258.24,376.00 L258.33,377.00 L258.43,378.00 L258.52,379.00 L258.61,380.00 L258.71,381.00 L258.81,382.00 L258.91,383.00 L259.01,384.00 L259.12,385.00 L259.22,386.00 L259.33,387.00 L259.45,388.00 L259.57,389.00 L259.69,390.00 L259.82,391.00 L259.96,392.00 L260.10,393.00 L260.20,420.00 L260.60,483.00 L261.00,420.00 L261.34,393.55 L261.50,391.92 L261.66,390.28 L261.80,388.62 L261.93,386.93 L262.05,385.23 L262.17,383.52 L262.29,381.79 L262.40,380.05 L262.52,378.29 L262.65,376.53 L262.78,374.77 L262.92,372.99 L263.07,371.21 L263.24,369.44 L263.42,367.66 L263.63,365.88 L263.86,364.10 L264.11,362.33 L264.39,360.56 L264.69,358.81 L265.03,357.06 L265.41,355.32 L265.82,353.60 L266.27,351.89 L266.75,350.20 L267.28,348.52 L267.85,346.87 L268.46,345.24 L269.11,343.63 L269.80,342.05 L270.54,340.50 L271.33,338.98 L272.16,337.49 L273.05,336.04 L273.98,334.62 L274.96,333.24 L275.99,331.90 L277.07,330.60 L278.19,329.33 L279.36,328.11 L280.57,326.93 L281.81,325.79 L283.10,324.69 L284.43,323.63 L285.78,322.61 L287.18,321.64 L288.60,320.71 L290.05,319.82 L291.53,318.97 L293.03,318.16 L294.57,317.40 L296.12,316.67 L297.70,315.98 L299.30,315.32 L300.92,314.70 L302.55,314.11 L304.21,313.55 L305.88,313.03 L307.57,312.53 L309.27,312.07 L310.99,311.62 L312.72,311.21 L314.45,310.82 L316.20,310.45 L317.95,310.11 L319.72,309.78 L321.48,309.48 L323.25,309.19 L325.03,308.92 L326.80,308.67 L328.58,308.43 L330.36,308.21 L332.13,307.99 L333.90,307.79 L335.67,307.60 L337.43,307.41 L339.19,307.23 L340.93,307.06 L342.67,306.89 L344.40,306.73 L346.11,306.57 L347.82,306.41 L349.51,306.24 L351.18,306.08 L352.84,305.91 L354.47,305.74 L356.09,305.56 L357.69,305.38 L359.27,305.19" fill="none" stroke="#0000c0" stroke-width="1.6" stroke-linejoin="round"/>
<rect x="259.4" y="392" width="2.6" height="91" fill="#0000c8"/>
<path d="M359.27,305.19 L366.00,304.93 L372.00,304.71 L378.00,304.54 L384.00,304.43 L390.00,304.36 L396.00,304.32 L402.00,304.32 L408.00,304.35 L414.00,304.40 L420.00,304.47 L426.00,304.57 L432.00,304.67 L438.00,304.80 L444.00,304.94 L450.00,305.08 L480.00,305.95 L510.00,306.93 L540.00,307.97 L570.00,309.03 L600.00,310.07 L630.00,311.10 L660.00,312.10 L690.00,313.07 L720.00,314.01 L750.00,314.93 L780.00,315.81 L810.00,316.67 L840.00,317.50 L870.00,318.31 L900.00,319.10 L930.00,319.87 L960.00,320.62 L990.00,321.35 L1020.00,322.07 L1050.00,322.77 L1080.00,323.45 L1110.00,324.12 L1130.00,324.57" fill="none" stroke="#0000a8" stroke-width="1" shape-rendering="crispEdges"/>
<path d="M359.27,305.19 L366.00,304.93 L372.00,304.71 L378.00,304.54 L384.00,304.43 L390.00,304.36 L396.00,304.32 L402.00,304.32 L408.00,304.35 L414.00,304.40 L420.00,304.47 L426.00,304.57 L432.00,304.67 L438.00,304.80 L444.00,304.94 L450.00,305.08 L480.00,305.95 L510.00,306.93 L540.00,307.97 L570.00,309.03 L600.00,310.07 L630.00,311.10 L660.00,312.10 L690.00,313.07 L720.00,314.01 L750.00,314.93 L780.00,315.81 L810.00,316.67 L840.00,317.50 L870.00,318.31 L900.00,319.10 L930.00,319.87 L960.00,320.62 L990.00,321.35 L1020.00,322.07 L1050.00,322.77 L1080.00,323.45 L1110.00,324.12 L1130.00,324.57" fill="none" stroke="#0000a8" stroke-width="1.3" opacity="0.45"/></svg>
<div class="yl" style="top:192px">0.00</div><div class="yl" style="top:259px">-25.00</div><div class="yl" style="top:326px">-50.00</div><div class="yl" style="top:393px">-75.00</div><div class="yl" style="top:460px">-100.00</div><div class="yl" style="top:527px">-125.00</div>
<div class="xl" style="left:103px">0.00</div><div class="xl" style="left:348px">20.00</div><div class="xl" style="left:594px">40.00</div><div class="xl" style="left:839px">60.00</div><div class="xl" style="left:1084px">80.00</div>
<div class="a" style="left:43px;top:129px;font-size:11px;font-weight:bold">23 Mar 2011</div>
<div class="a" style="left:487px;top:128px;width:200px;text-align:center;font-size:11px;font-weight:bold;line-height:14.5px"><span style="letter-spacing:0.25px">Ansoft Corporation</span><br>XY Plot 9<br>Circuit1</div>
<div class="a" style="left:1091px;top:129px;font-size:11px;font-weight:bold;letter-spacing:-0.4px">19:41:40</div>
<div class="a" style="left:601px;top:554px;width:80px;text-align:center;font-size:10px">F [MHz]</div>
<div class="a" style="left:67px;top:361px;width:16px;height:16px"><div style="transform:rotate(-90deg);transform-origin:center;position:absolute;left:-4px;top:2px;width:24px;font-size:11px;font-weight:bold;text-align:center;line-height:12px">Y 1</div></div>
<div class="a" style="left:4px;top:567px;width:233px;height:37px;border:1px solid #000;background:#fff"></div>
<div class="a" style="left:11px;top:573px;font-size:20px;font-weight:bold;line-height:24px">XY: 9.05MHz -109.40</div>

<!-- legend panel -->
<div class="a" style="left:1178px;top:112px;width:188px;height:494px;background:#808080"></div>
<div class="a" style="left:1178px;top:113px;width:186px;height:492px;background:#000"></div>
<div class="a" style="left:1179px;top:114px;width:184px;height:490px;background:#fff"></div>
<div class="a" style="left:1363px;top:113px;width:3px;height:493px;background:#d4d0c8;border-left:1px solid #e0e0e0"></div>
<div class="a" style="left:1179px;top:114px;width:183px;height:16px;background:#000"></div>
<div class="a" style="left:1180px;top:115px;width:14px;height:14px;background:#c0c0c0;border-top:1px solid #fff;border-left:1px solid #fff"></div>
<div class="a" style="left:1196px;top:115px;width:14px;height:14px;background:#c0c0c0;border-top:1px solid #fff;border-left:1px solid #fff"></div>
<div class="a" style="left:1210px;top:114px;width:152px;height:16px;background:#fff"></div>
<svg class="a" style="left:1180px;top:115px" width="32" height="14" shape-rendering="crispEdges"><g fill="#000">
<rect x="7" y="5" width="1" height="1"/><rect x="6" y="6" width="1" height="1"/><rect x="8" y="6" width="1" height="1"/><rect x="5" y="7" width="1" height="1"/><rect x="7" y="7" width="1" height="1"/><rect x="9" y="7" width="1" height="1"/><rect x="4" y="8" width="1" height="1"/><rect x="6" y="8" width="1" height="1"/><rect x="8" y="8" width="1" height="1"/><rect x="10" y="8" width="1" height="1"/><rect x="3" y="9" width="1" height="1"/><rect x="5" y="9" width="1" height="1"/><rect x="9" y="9" width="1" height="1"/><rect x="11" y="9" width="1" height="1"/>
<rect x="23" y="9" width="1" height="1"/><rect x="22" y="8" width="1" height="1"/><rect x="24" y="8" width="1" height="1"/><rect x="21" y="7" width="1" height="1"/><rect x="23" y="7" width="1" height="1"/><rect x="25" y="7" width="1" height="1"/><rect x="20" y="6" width="1" height="1"/><rect x="22" y="6" width="1" height="1"/><rect x="24" y="6" width="1" height="1"/><rect x="26" y="6" width="1" height="1"/><rect x="19" y="5" width="1" height="1"/><rect x="21" y="5" width="1" height="1"/><rect x="25" y="5" width="1" height="1"/><rect x="27" y="5" width="1" height="1"/>
</g></svg>
<div class="a" style="left:1361px;top:130px;width:1px;height:135px;background:#000"></div>
<div class="a" style="left:1180px;top:197px;width:182px;height:1px;background:#000"></div>
<div class="a" style="left:1180px;top:264px;width:182px;height:2px;background:#000"></div>
<div class="a lg" style="left:1271px;top:133px">Y1</div>
<div class="a" style="left:1298px;top:139px;width:63px;height:1px;background:#0000a0"></div>
<svg class="a" style="left:1325px;top:135px" width="10" height="9"><circle cx="4.8" cy="4.2" r="3.3" fill="#fff" stroke="#0000a0" stroke-width="1"/></svg>
<div class="a" style="left:1299px;top:144px;width:62px;height:1px;background:#000"></div>
<div class="a lg" style="left:1184px;top:145px;line-height:13px">dB(S11)<br>NWA1</div>
<div class="a lg" style="left:1271px;top:201px">Y1</div>
<div class="a" style="left:1298px;top:206px;width:63px;height:1px;background:#c00000"></div>
<div class="a" style="left:1330px;top:202px;width:1px;height:9px;background:#c00000"></div>
<div class="a" style="left:1299px;top:212px;width:62px;height:1px;background:#000"></div>
<div class="a lg" style="left:1184px;top:213px;line-height:13px">dB(S21)<br>NWA1</div>

<!-- bottom project panel -->
<div class="a" style="left:0;top:604px;width:1366px;height:1px;background:#d4d0c8"></div>
<div class="a" style="left:0;top:605px;width:1366px;height:1px;background:#fff"></div>
<div class="a" style="left:0;top:606px;width:1366px;height:5px;background:#d4d0c8"></div>
<div class="a" style="left:0;top:611px;width:1366px;height:1px;background:#808080"></div>
<div class="a" style="left:0;top:612px;width:1366px;height:92px;background:#d4d0c8"></div>
<div class="a" style="left:20px;top:612px;width:1346px;height:1px;background:#000"></div>
<div class="a" style="left:20px;top:612px;width:1px;height:92px;background:#000"></div>
<div class="a" style="left:1364px;top:612px;width:1px;height:92px;background:#000"></div>
<div class="a" style="left:21px;top:613px;width:1343px;height:1px;background:#fff"></div>
<div class="a" style="left:21px;top:613px;width:1px;height:90px;background:#fff"></div>
<!-- left strip buttons -->
<div class="a" style="left:9px;top:616px;width:11px;height:11px;background:#d4d0c8;border-top:1px solid #fff;border-left:1px solid #fff;border-bottom:1px solid #808080"></div>
<svg class="a" style="left:9px;top:616px" width="12" height="12"><path d="M3,3 L8,8 M8,3 L3,8" stroke="#000" stroke-width="1.5"/></svg>
<div class="a" style="left:9px;top:630px;width:11px;height:11px;background:#d4d0c8;border-top:1px solid #fff;border-left:1px solid #fff;border-bottom:1px solid #808080"></div>
<svg class="a" style="left:9px;top:630px" width="12" height="12"><rect x="3.5" y="2.5" width="5" height="6" fill="none" stroke="#000"/><rect x="3" y="2" width="6" height="2" fill="#000"/></svg>
<div class="a" style="left:9px;top:644px;width:11px;height:12px;background:#d4d0c8;border-top:1px solid #fff;border-left:1px solid #fff;border-bottom:1px solid #808080"></div>
<svg class="a" style="left:9px;top:644px" width="12" height="12"><path d="M8,2 L4,6 L8,10 Z" fill="#909090"/></svg>
<div class="a" style="left:12px;top:658px;width:1px;height:42px;background:#fff"></div>
<div class="a" style="left:14px;top:658px;width:1px;height:42px;background:#808080"></div>
<div class="a" style="left:16px;top:658px;width:1px;height:42px;background:#fff"></div>
<div class="a" style="left:18px;top:658px;width:1px;height:42px;background:#808080"></div>

<div class="a" style="left:25px;top:617px;width:1335px;height:1px;background:#808080"></div>
<div class="a" style="left:25px;top:617px;width:1px;height:84px;background:#808080"></div>
<div class="a" style="left:26px;top:618px;width:1333px;height:1px;background:#404040"></div>
<div class="a" style="left:26px;top:618px;width:1px;height:82px;background:#404040"></div>
<div class="a" style="left:27px;top:619px;width:1332px;height:80px;background:#fff"></div>
<div class="a" style="left:26px;top:699px;width:1334px;height:1px;background:#d4d0c8"></div>
<div class="a" style="left:25px;top:700px;width:1336px;height:1px;background:#fff"></div>
<div class="a" style="left:1359px;top:618px;width:1px;height:82px;background:#d4d0c8"></div>
<div class="a" style="left:1360px;top:617px;width:1px;height:84px;background:#fff"></div>
<!-- tree item -->
<div class="a" style="left:31px;top:623px;width:9px;height:9px;border:1px solid #909090;background:#fff"></div>
<svg class="a" style="left:31px;top:623px" width="9" height="9"><path d="M2,4.5 H7 M4.5,2 V7" stroke="#000" stroke-width="1"/></svg>
<svg class="a" style="left:40px;top:617px" width="24" height="18"><path d="M1,10.5 H6" stroke="#808080" stroke-dasharray="1,1"/>
<rect x="14.5" y="1.5" width="8" height="14" fill="#fff" stroke="#009000"/>
<rect x="17" y="3" width="2" height="3" fill="#20c020"/><rect x="20" y="3" width="1" height="3" fill="#20c020"/>
<rect x="17" y="9" width="2" height="3" fill="#20c020"/><rect x="20" y="9" width="1" height="3" fill="#20c020"/>
<rect x="6.5" y="4.5" width="6" height="11" fill="#fff" stroke="#009000"/>
<rect x="8.5" y="6.5" width="6" height="10" fill="#fff" stroke="#009000"/>
<path d="M10,9.5 H13 M10,11.5 H13 M10,13.5 H13" stroke="#20c020"/></svg>
<div class="a" style="left:67px;top:620px;font-size:11px;letter-spacing:-0.15px;white-space:pre">DIPLEXER2 (C:/Program Files (x86)/Ansoft/Designer2/)</div>
<!-- blue arrow button -->
<div class="a" style="left:1318px;top:616px;width:40px;height:40px;border:1px solid #404040;background:#fff"></div>
<div class="a" style="left:1322px;top:620px;width:32px;height:32px;border:2px solid #789cd4;background:linear-gradient(to bottom,#f0f6fe 0%,#b4cae8 40%,#90b0dc 75%,#a4bee2 100%)"></div>
<svg class="a" style="left:1322px;top:620px" width="32" height="32"><path d="M11,9 H21 V15.5 H24 L16,23 L8,15.5 H11 Z" fill="#dae6f6"/></svg>
<div class="a" style="left:0;top:704px;width:1366px;height:1px;background:#808080"></div>
<div class="a" style="left:0;top:705px;width:1366px;height:1px;background:#fff"></div>

<!-- status bar -->
<div class="a" style="left:2px;top:710px;font-size:11px">Ready</div>
<div class="a" style="left:1277px;top:708px;width:25px;height:15px;border-top:1px solid #808080;border-left:1px solid #808080;border-right:1px solid #fff;border-bottom:1px solid #fff"></div>
<div class="a" style="left:1305px;top:708px;width:27px;height:15px;border-top:1px solid #808080;border-left:1px solid #808080;border-right:1px solid #fff;border-bottom:1px solid #fff"></div>
<div class="a" style="left:1335px;top:708px;width:31px;height:15px;border-top:1px solid #808080;border-left:1px solid #808080;border-right:1px solid #fff;border-bottom:1px solid #fff"></div>

<!-- taskbar -->
<div class="a" style="left:0;top:725px;width:1366px;height:43px;background:#d4d0c8;border-top:1px solid #fff"></div>
<!-- start button -->
<div class="a" style="left:2px;top:728px;width:52px;height:38px;background:#d4d0c8;border-top:1px solid #fff;border-left:1px solid #fff;border-right:1px solid #404040;border-bottom:1px solid #404040;box-shadow:inset -1px -1px 0 #808080"></div>
<svg class="a" style="left:4px;top:738px" width="17" height="15" viewBox="0 0 17 15">
<path d="M2,1.5 Q5,0 8,1.5 L6.8,6.8 Q4,5.5 1,7 Z" fill="#f04820"/>
<path d="M9,1.6 Q12,3 16,1 L14.8,6.5 Q11,7.6 7.8,6.9 Z" fill="#60b030"/>
<path d="M1,7.8 Q4,6.3 6.6,7.6 L5.4,13 Q3,11.8 0,13.5 Z" fill="#3090e0"/>
<path d="M7.6,7.7 Q11,8.4 14.6,7.2 L13.4,12.8 Q10,14.3 6.4,13.2 Z" fill="#f8c020"/>
</svg>
<div class="a" style="left:20px;top:740px;font-size:12.5px;font-weight:bold;letter-spacing:-0.1px">Start</div>
<!-- quick launch: explorer -->
<svg class="a" style="left:71px;top:734px" width="32" height="29" viewBox="0 0 32 29">
<path d="M1,3 H10 L12,5 H30 V26 H1 Z" fill="#f0d888" stroke="#c8a850" stroke-width="1"/>
<rect x="3" y="2" width="3" height="2" fill="#20a020"/><rect x="12" y="4" width="3" height="2" fill="#c04020"/>
<path d="M1,8 H31 V26 H1 Z" fill="#f8e8a8" stroke="#d0b060"/>
<rect x="20" y="6" width="3" height="2" fill="#2080c0"/>
<path d="M7,28 V18 Q7,16 9,16 H23 Q25,16 25,18 V28 H21 V22 H11 V28 Z" fill="#90c8f0" stroke="#4a90c8"/>
</svg>
<!-- media player -->
<svg class="a" style="left:122px;top:735px" width="30" height="27" viewBox="0 0 30 27">
<rect x="6" y="2" width="21" height="23" fill="#c0dcf4" stroke="#7aaad8"/>
<rect x="3" y="1.5" width="21" height="23" fill="#c8e0f8" stroke="#7aaad8"/>
<rect x="1" y="1" width="21" height="23" fill="#b8d8f4" stroke="#5a90c8"/>
<circle cx="11.5" cy="12.5" r="8.5" fill="#f08028" stroke="#d06010"/>
<path d="M9,7.5 L16.5,12.5 L9,17.5 Z" fill="#fff"/>
</svg>
<!-- rdp -->
<svg class="a" style="left:171px;top:735px" width="31" height="26" viewBox="0 0 31 26">
<rect x="12" y="1" width="18" height="16" fill="#1040a0" stroke="#5080c0"/>
<path d="M14,16 L28,2" stroke="#80b0f0" stroke-width="1.5"/>
<path d="M18,18 H26 L28,22 H18 Z" fill="#909090"/>
<circle cx="10" cy="8" r="5" fill="#e0b070"/><path d="M5,7 Q6,2 10,2.5 Q14,3 14.5,7 Q10,5 5,7 Z" fill="#704020"/>
<path d="M2,25 Q2,14 10,14 Q17,14 17,25 Z" fill="#80c0e8"/>
<path d="M1,20 Q10,26 24,10" fill="none" stroke="#e0c040" stroke-width="2.2"/>
</svg>
<!-- firefox button -->
<div class="a" style="left:213px;top:728px;width:40px;height:38px;background:#d4d0c8;border-top:1px solid #fff;border-left:1px solid #fff;border-right:1px solid #404040;border-bottom:1px solid #404040;box-shadow:inset -1px -1px 0 #808080"></div>
<svg class="a" style="left:216px;top:730px" width="34" height="33" viewBox="0 0 34 33">
<defs><radialGradient id="ffb" cx="0.45" cy="0.2" r="0.8"><stop offset="0" stop-color="#a8e8fc"/><stop offset="0.5" stop-color="#3a8ad0"/><stop offset="1" stop-color="#0a2a78"/></radialGradient>
<radialGradient id="ffo" cx="0.85" cy="0.4" r="0.95"><stop offset="0" stop-color="#ffe040"/><stop offset="0.35" stop-color="#f89020"/><stop offset="0.7" stop-color="#e05010"/><stop offset="1" stop-color="#b02808"/></radialGradient></defs>
<circle cx="17.5" cy="16" r="15" fill="url(#ffo)"/>
<circle cx="19" cy="13" r="10.8" fill="url(#ffb)"/>
<path d="M3,15 Q4,7 9,5 Q13,4.5 17,8 Q15.5,11 17,12.5 Q14,13.5 15,17 Q19,18 23,20 Q19,23 14,22 Q6,20 3,15 Z" fill="url(#ffo)"/>
<path d="M3.5,4 L8,8 L5,11 Z" fill="#e05818"/>
</svg>
<!-- separator -->
<div class="a" style="left:253px;top:728px;width:1px;height:38px;background:#404040"></div>
<div class="a" style="left:254px;top:728px;width:2px;height:38px;background:#fff;border-right:1px solid #d4d0c8"></div>
<div class="a" style="left:256px;top:728px;width:1px;height:38px;background:#404040"></div>
<div class="a" style="left:258px;top:728px;width:1px;height:38px;background:#fff"></div>
<div class="a" style="left:260px;top:728px;width:1px;height:38px;background:#404040"></div>
<!-- paint button -->
<div class="a" style="left:263px;top:728px;width:48px;height:38px;background:#d4d0c8;border-top:1px solid #fff;border-left:1px solid #fff;border-right:1px solid #404040;border-bottom:1px solid #404040;box-shadow:inset -1px -1px 0 #808080"></div>
<svg class="a" style="left:271px;top:731px" width="33" height="32" viewBox="0 0 33 32">
<path d="M2,18 Q0,9 12,6 Q24,4 28,12 Q31,20 22,26 Q14,31 8,28 Q11,24 8,22 Q4,24 2,18 Z" fill="#c8e0f0" stroke="#6090b8"/>
<circle cx="7" cy="17" r="2.5" fill="#e04040"/><circle cx="11" cy="11" r="2.5" fill="#50c040"/><circle cx="18" cy="8" r="2.5" fill="#f0c020"/><circle cx="13" cy="19" r="2" fill="#fff" stroke="#6090b8"/>
<path d="M14,31 L27,5" stroke="#c07020" stroke-width="2.5"/>
<path d="M25,6 L26,1 Q29,-1 31,2 L28,7 Z" fill="#e0b060"/>
</svg>
<!-- ansoft pressed -->
<div class="a" style="left:313px;top:728px;width:48px;height:38px;background:#fcfcfc;border-top:1px solid #404040;border-left:1px solid #404040;border-right:1px solid #fff;border-bottom:1px solid #fff;box-shadow:inset 1px 1px 0 #808080"></div>
<svg class="a" style="left:321px;top:730px" width="33" height="34" viewBox="0 0 33 34">
<defs><radialGradient id="ans" cx="0.3" cy="0.3" r="0.85"><stop offset="0" stop-color="#7a90e8"/><stop offset="0.6" stop-color="#3a4ca8"/><stop offset="1" stop-color="#1a2060"/></radialGradient></defs>
<circle cx="16.5" cy="16.8" r="15.6" fill="url(#ans)"/>
<path d="M15.3,1.7 L28.7,25 H3.2 Z" fill="#f0f4fc"/>
<path d="M5,19.3 L8.4,25 M10,13.3 L16,25 M13.8,6.4 L22.7,25" stroke="#c82020" stroke-width="1.9"/>
<path d="M6.6,18.5 L10,25 M11.8,12.5 L17.6,25 M15.5,5.5 L24.2,25" stroke="#8090c0" stroke-width="0.6"/>
<path d="M3,25 H29 Q26,32 16.5,32.4 Q7,32 3,25 Z" fill="#1e2660"/>
</svg>
<!-- tray -->
<div class="a" style="left:1108px;top:738px;font-size:11.5px">PL</div>
<div class="a" style="left:1127px;top:734px;width:2px;height:22px;border-left:1px solid #808080;border-right:1px solid #fff"></div>
<svg class="a" style="left:1135px;top:738px" width="16" height="14" viewBox="0 0 16 14"><path d="M8,5 Q10,1 15,2" fill="none" stroke="#909090"/><rect x="0.5" y="5.5" width="15" height="8" rx="1.5" fill="#e8e8e8" stroke="#909090"/><path d="M3,8 H13 M3,10 H13" stroke="#a0a0a0" stroke-dasharray="1,1"/></svg>
<div class="a" style="left:1155px;top:734px;width:2px;height:22px;border-left:1px solid #808080;border-right:1px solid #fff"></div>
<div class="a" style="left:1158px;top:728px;width:207px;height:37px;border-top:1px solid #808080;border-left:1px solid #808080;border-right:1px solid #fff;border-bottom:1px solid #fff"></div>
<svg class="a" style="left:1164px;top:740px" width="8" height="10"><path d="M1,4 L3.5,1.5 L6,4 M1,8 L3.5,5.5 L6,8" fill="none" stroke="#000" stroke-width="1.4"/></svg>
<svg class="a" style="left:1181px;top:739px" width="16" height="16" viewBox="0 0 16 16"><path d="M2.5,2.5 H9 V14.5 H2.5 Z" fill="#fff" stroke="#404040"/><path d="M0.5,4 V12" stroke="#404040"/><path d="M8,6 H13 V9 Q13,11 10.5,11 Q8,11 8,9 Z" fill="#fff" stroke="#404040"/><path d="M9.5,6 V3 M11.5,6 V3 M10.5,11 V15" stroke="#404040" stroke-width="1.2"/></svg>
<svg class="a" style="left:1204px;top:739px" width="18" height="16" viewBox="0 0 18 16"><path d="M1,1 Q8,-1 15,1 V8 Q15,13 8,15 Q1,13 1,8 Z" fill="#fff" stroke="#606060" stroke-width="1.3"/><path d="M4,4 V9 M8,3 V10 M12,4 V9" stroke="#b0b0b0" stroke-width="1.5"/><rect x="9" y="7" width="8" height="8" rx="1" fill="#c01830"/><path d="M13,8.5 V12 M13,13 V14" stroke="#fff" stroke-width="1.3"/></svg>
<svg class="a" style="left:1229px;top:741px" width="17" height="12"><rect x="0.5" y="8.5" width="2" height="3" fill="#fff" stroke="#808080"/><rect x="4.5" y="6.5" width="2" height="5" fill="#fff" stroke="#808080"/><rect x="8.5" y="4.5" width="2" height="7" fill="#b0b0b0" stroke="#808080"/><rect x="12.5" y="1.5" width="3" height="10" fill="#a0a0a0" stroke="#808080"/></svg>
<svg class="a" style="left:1254px;top:739px" width="15" height="16" viewBox="0 0 15 16"><path d="M0.5,5.5 H3.5 L8.5,1 V15 L3.5,10.5 H0.5 Z" fill="#f0f0f0" stroke="#808080"/><path d="M11,5 Q13,8 11,11" fill="none" stroke="#a0a0a0"/></svg>
<div class="a" style="left:1270px;top:731px;width:82px;text-align:center;font-size:11px;line-height:16px">19:42<br>2011-03-23</div>
<svg class="a" style="left:1346px;top:741px" width="16" height="13"><defs><linearGradient id="sd" x1="0" y1="0" x2="0" y2="1"><stop offset="0" stop-color="#3070d0"/><stop offset="1" stop-color="#60a0f0"/></linearGradient></defs><rect x="0.5" y="0.5" width="15" height="12" fill="url(#sd)" stroke="#a0c8f0"/><rect x="4" y="9" width="11" height="2" fill="#303040"/></svg>

</body></html>
